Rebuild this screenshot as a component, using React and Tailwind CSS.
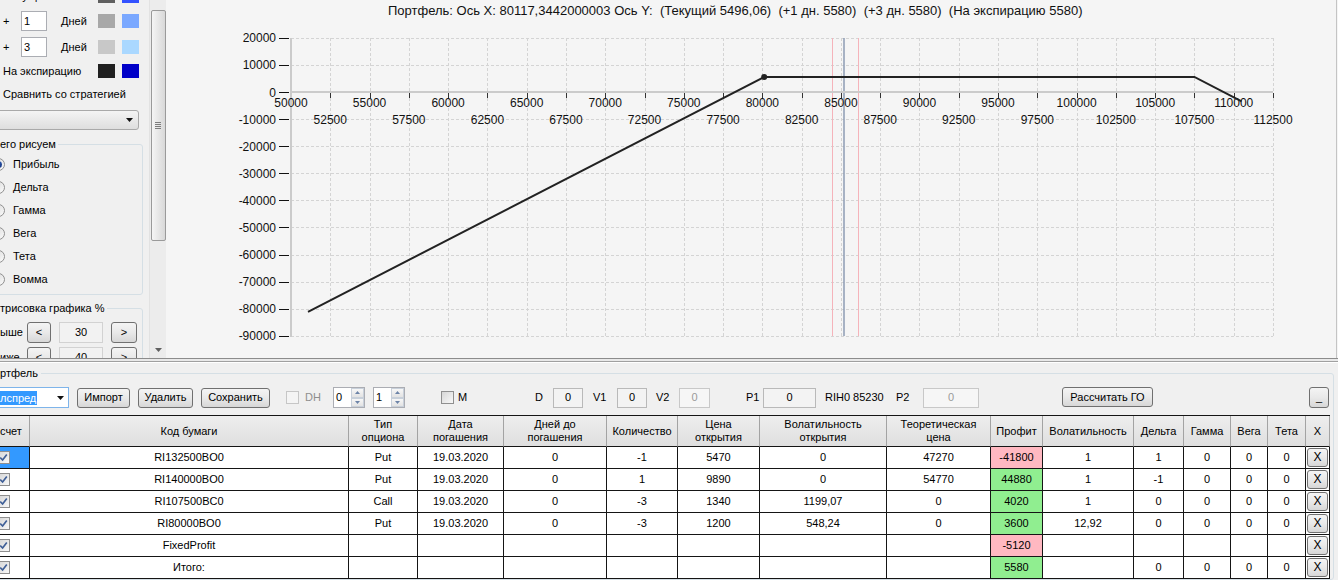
import React from 'react';

function Btn({ children, className = '' }) {
  return (
    <div className={`shrink-0 flex items-center justify-center border border-[#707070] rounded-[3px] bg-linear-to-b from-[#f4f4f4] via-[#e9e9e9] to-[#d7d7d7] text-[11px] text-black ${className}`}>
      {children}
    </div>
  );
}

function Check({ checked = true, className = '' }) {
  return (
    <div className={`shrink-0 w-[13px] h-[13px] border border-[#8f8f8f] bg-linear-to-br from-[#d6d6d6] to-[#f8f8f8] flex items-center justify-center ${className}`}>
      {checked && (
        <svg width="9" height="9" viewBox="0 0 9 9">
          <path d="M1.2 4.6 L3.6 7 L7.8 1.6" stroke="#3f5f97" strokeWidth="1.7" fill="none" />
        </svg>
      )}
    </div>
  );
}

function Radio({ label, checked }) {
  return (
    <div className="h-[23px] flex items-center">
      <div className="shrink-0 w-[13px] h-[13px] rounded-full border border-[#8f8f8f] bg-linear-to-br from-[#d8d8d8] to-[#fbfbfb] flex items-center justify-center">
        {checked && <div className="w-[7px] h-[7px] rounded-full bg-linear-to-br from-[#3a6fd0] to-[#14327a]" />}
      </div>
      <span className="ml-[8px]">{label}</span>
    </div>
  );
}

function Swatch({ className = '' }) {
  return <div className={`shrink-0 w-[17px] h-[14px] ${className}`} />;
}

function Arrow() {
  return (
    <svg width="7" height="4" viewBox="0 0 7 4">
      <path d="M0 0 L7 0 L3.5 4 Z" fill="#111" />
    </svg>
  );
}

function LeftPanel() {
  return (
    <div className="shrink-0 w-[149px] h-[358px] overflow-hidden bg-[#f0f0f0] text-[11px] leading-[13px]">
      <div className="mt-[-16px]">
        <div className="h-[24px] flex items-center">
          <span className="shrink-0 w-[98px] pl-[5px]">Текущий</span>
          <Swatch className="bg-[#5f5f5f]" />
          <Swatch className="ml-[7px] bg-[#3352ff]" />
        </div>
        <div className="h-[26px] flex items-center">
          <span className="shrink-0 w-[21px] pl-[3px]">+</span>
          <div className="shrink-0 w-[26px] h-[20px] border border-[#abadb3] bg-white flex items-center pl-[2px]">1</div>
          <span className="shrink-0 w-[51px] pl-[14px]">Дней</span>
          <Swatch className="bg-[#a8a8a8]" />
          <Swatch className="ml-[7px] bg-[#7aa8ff]" />
        </div>
        <div className="h-[26px] flex items-center">
          <span className="shrink-0 w-[21px] pl-[3px]">+</span>
          <div className="shrink-0 w-[26px] h-[20px] border border-[#abadb3] bg-white flex items-center pl-[2px]">3</div>
          <span className="shrink-0 w-[51px] pl-[14px]">Дней</span>
          <Swatch className="bg-[#c8c8c8]" />
          <Swatch className="ml-[7px] bg-[#aad8ff]" />
        </div>
        <div className="h-[22px] flex items-center">
          <span className="shrink-0 w-[98px] pl-[3px]">На экспирацию</span>
          <Swatch className="bg-[#202020]" />
          <Swatch className="ml-[7px] bg-[#0000c8]" />
        </div>
        <div className="h-[24px] flex items-center pl-[3px]">Сравнить со стратегией</div>
        <div className="mt-[4px] ml-[-4px] w-[143px] h-[20px] border border-[#a9a9a9] rounded-[3px] bg-linear-to-b from-[#f4f4f4] to-[#dedede] flex items-center justify-end pr-[5px]">
          <Arrow />
        </div>
        <fieldset className="mt-[7px] ml-[-10px] w-[153px] border border-[#d5dfe5] rounded-[3px]">
          <legend className="ml-[9px] pr-[2px] leading-[14px]">его рисуем</legend>
          <div className="pl-[1px] pt-[2px] pb-[3px]">
            <Radio label="Прибыль" checked />
            <Radio label="Дельта" />
            <Radio label="Гамма" />
            <Radio label="Вега" />
            <Radio label="Тета" />
            <Radio label="Вомма" />
          </div>
        </fieldset>
        <fieldset className="mt-[6px] ml-[-10px] w-[153px] border border-[#d5dfe5] rounded-[3px]">
          <legend className="ml-[9px] pr-[2px] leading-[14px]">трисовка графика %</legend>
          <div className="pl-[9px] pt-[6px] pb-[6px]">
            <div className="h-[22px] flex items-center">
              <span className="shrink-0 w-[27px]">ыше</span>
              <Btn className="w-[24px] h-[21px]">&lt;</Btn>
              <div className="shrink-0 ml-[8px] w-[44px] h-[21px] border border-[#d2d2d2] bg-[#f2f2f2] flex items-center justify-center">30</div>
              <Btn className="ml-[8px] w-[26px] h-[21px]">&gt;</Btn>
            </div>
            <div className="mt-[3px] h-[22px] flex items-center">
              <span className="shrink-0 w-[27px]">иже</span>
              <Btn className="w-[24px] h-[21px]">&lt;</Btn>
              <div className="shrink-0 ml-[8px] w-[44px] h-[21px] border border-[#d2d2d2] bg-[#f2f2f2] flex items-center justify-center">40</div>
              <Btn className="ml-[8px] w-[26px] h-[21px]">&gt;</Btn>
            </div>
          </div>
        </fieldset>
      </div>
    </div>
  );
}

function ScrollBar() {
  return (
    <div className="shrink-0 w-[17px] h-[358px] bg-[#ececec] border-l border-[#e2e2e2] flex flex-col items-center">
      <div className="mt-[10px] w-[15px] h-[231px] rounded-[2px] border border-[#9a9a9a] bg-linear-to-r from-[#f5f5f5] to-[#d8d8d8] flex flex-col items-center justify-center gap-[1px]">
        <div className="w-[6px] h-[1px] bg-[#7d7d7d]" />
        <div className="w-[6px] h-[1px] bg-[#7d7d7d]" />
        <div className="w-[6px] h-[1px] bg-[#7d7d7d]" />
        <div className="w-[6px] h-[1px] bg-[#7d7d7d]" />
      </div>
      <div className="flex-1" />
      <div className="h-[17px] flex items-center justify-center">
        <svg width="7" height="4" viewBox="0 0 7 4">
          <path d="M0 0 L7 0 L3.5 4 Z" fill="#606060" />
        </svg>
      </div>
    </div>
  );
}

function Chart() {
  const X = (v) => 291 + ((v - 50000) * 982) / 62500;
  const Y = (v) => 92 - (v * 27.09) / 10000;
  const r = (n) => Math.round(n) + 0.5;
  const vgrid = [];
  for (let v = 52500; v <= 112500; v += 2500) vgrid.push(v);
  const hgrid = [];
  for (let v = 20000; v >= -90000; v -= 10000) hgrid.push(v);
  const row1 = [];
  for (let v = 50000; v <= 110000; v += 5000) row1.push(v);
  const row2 = [];
  for (let v = 52500; v <= 112500; v += 5000) row2.push(v);
  const ticks = [];
  for (let v = 52500; v <= 112500; v += 2500) ticks.push(v);
  const pts = [
    [51082, -81174],
    [80117, 5580],
    [107500, 5580],
    [110500, -3420],
  ];
  const d = pts.map((p, i) => `${i ? 'L' : 'M'}${X(p[0]).toFixed(1)} ${Y(p[1]).toFixed(1)}`).join(' ');
  return (
    <div className="flex-1 h-[358px] bg-[#f5f5f5]">
      <svg width="1172" height="358" viewBox="166 0 1172 358" fontFamily="Liberation Sans, Arial, sans-serif" fontSize="12">
        <text x="388" y="15" fontSize="13" fill="#111" xmlSpace="preserve">
          {'Портфель: Ось X: 80117,3442000003 Ось Y:  (Текущий 5496,06)  (+1 дн. 5580)  (+3 дн. 5580)  (На экспирацию 5580)'}
        </text>
        {hgrid
          .filter((v) => v !== 0)
          .map((v) => (
            <line key={'h' + v} x1={291} x2={1273} y1={r(Y(v))} y2={r(Y(v))} stroke="#d4d4d4" strokeDasharray="3 2" />
          ))}
        {vgrid.map((v) => (
          <line key={'v' + v} x1={r(X(v))} x2={r(X(v))} y1={38} y2={336} stroke="#d4d4d4" strokeDasharray="3 2" />
        ))}
        <line x1={832.5} x2={832.5} y1={38} y2={336} stroke="#f5b3ba" />
        <line x1={858.5} x2={858.5} y1={38} y2={336} stroke="#f5b3ba" />
        <line x1={844} x2={844} y1={38} y2={336} stroke="#8d9bb3" strokeWidth="1.5" />
        <line x1={291} x2={1273} y1={92} y2={92} stroke="#cbcbcb" strokeWidth="2" />
        <line x1={291} x2={291} y1={38} y2={337} stroke="#cbcbcb" strokeWidth="2" />
        {hgrid.map((v) => (
          <g key={'yl' + v}>
            <line x1={279} x2={289} y1={r(Y(v))} y2={r(Y(v))} stroke="#111" />
            <text x={276} y={Y(v) + 4.5} textAnchor="end" fill="#111">
              {v}
            </text>
          </g>
        ))}
        {ticks.map((v) => (
          <line key={'t' + v} x1={r(X(v))} x2={r(X(v))} y1={93} y2={98} stroke="#333" />
        ))}
        {row1.map((v) => (
          <text key={'r1' + v} x={X(v)} y={107} textAnchor="middle" fill="#111">
            {v}
          </text>
        ))}
        {row2.map((v) => (
          <text key={'r2' + v} x={X(v)} y={124} textAnchor="middle" fill="#111">
            {v}
          </text>
        ))}
        <path d={d} stroke="#222" strokeWidth="2" fill="none" />
        <circle cx={X(80117)} cy={Y(5580)} r="3" fill="#222" />
        <line x1={1336.5} x2={1336.5} y1={0} y2={358} stroke="#c4c4c4" />
      </svg>
    </div>
  );
}

function Spin({ v, className = '' }) {
  return (
    <div className={`shrink-0 w-[32px] h-[21px] border border-[#abadb3] bg-white flex ${className}`}>
      <span className="flex-1 pl-[2px] flex items-center">{v}</span>
      <div className="w-[13px] flex flex-col">
        <div className="flex-1 border border-[#c8d0da] bg-linear-to-b from-[#f7f7f7] to-[#e3e3e3] flex items-center justify-center">
          <svg width="5" height="3" viewBox="0 0 5 3">
            <path d="M0 3 L2.5 0 L5 3 Z" fill="#6d84a8" />
          </svg>
        </div>
        <div className="flex-1 border border-[#c8d0da] bg-linear-to-b from-[#f7f7f7] to-[#e3e3e3] flex items-center justify-center">
          <svg width="5" height="3" viewBox="0 0 5 3">
            <path d="M0 0 L5 0 L2.5 3 Z" fill="#6d84a8" />
          </svg>
        </div>
      </div>
    </div>
  );
}

function Box({ children, className = '' }) {
  return (
    <div className={`shrink-0 h-[20px] border border-[#b9b9b9] bg-[#f3f3f3] flex items-center justify-center ${className}`}>
      {children}
    </div>
  );
}

function Toolbar() {
  return (
    <div className="h-[21px] flex items-center">
      <div className="shrink-0 ml-[-2px] w-[71px] h-[21px] border border-[#7eb4ea] bg-white flex items-center overflow-hidden">
        <span className="ml-[1px] pr-[1px] h-[14px] leading-[14px] bg-[#3399ff] text-white whitespace-nowrap">лспред</span>
        <div className="ml-auto mr-[4px]">
          <Arrow />
        </div>
      </div>
      <Btn className="ml-[8px] w-[53px] h-[20px]">Импорт</Btn>
      <Btn className="ml-[8px] w-[55px] h-[20px]">Удалить</Btn>
      <Btn className="ml-[8px] w-[69px] h-[20px]">Сохранить</Btn>
      <div className="shrink-0 ml-[16px] w-[13px] h-[13px] border border-[#c6c6c6] bg-[#f4f4f4]" />
      <span className="shrink-0 ml-[6px] w-[28px] text-[#8e8e8e]">DH</span>
      <Spin v="0" />
      <Spin v="1" className="ml-[8px]" />
      <Check checked={false} className="ml-[36px]" />
      <span className="shrink-0 ml-[4px] w-[77px]">M</span>
      <span className="shrink-0 w-[18px]">D</span>
      <Box className="w-[30px]">0</Box>
      <span className="shrink-0 ml-[10px] w-[24px]">V1</span>
      <Box className="w-[30px]">0</Box>
      <span className="shrink-0 ml-[9px] w-[23px]">V2</span>
      <Box className="w-[31px] text-[#9a9a9a] bg-[#f6f6f6] border-[#c8c8c8]">0</Box>
      <span className="shrink-0 ml-[36px] w-[17px]">P1</span>
      <Box className="w-[53px]">0</Box>
      <span className="shrink-0 ml-[9px] w-[71px]">RIH0 85230</span>
      <span className="shrink-0 w-[27px]">P2</span>
      <Box className="w-[56px] text-[#9a9a9a] bg-[#f6f6f6] border-[#c8c8c8]">0</Box>
      <Btn className="ml-[83px] w-[91px] h-[20px] self-start">Рассчитать ГО</Btn>
      <Btn className="ml-[156px] w-[20px] h-[21px]">_</Btn>
    </div>
  );
}

const headers = [
  ['счет'],
  ['Код бумаги'],
  ['Тип', 'опциона'],
  ['Дата', 'погашения'],
  ['Дней до', 'погашения'],
  ['Количество'],
  ['Цена', 'открытия'],
  ['Волатильность', 'открытия'],
  ['Теоретическая', 'цена'],
  ['Профит'],
  ['Волатильность'],
  ['Дельта'],
  ['Гамма'],
  ['Вега'],
  ['Тета'],
  ['X'],
];

const rows = [
  { sel: true, c: ['RI132500BO0', 'Put', '19.03.2020', '0', '-1', '5470', '0', '47270'], p: '-41800', pink: true, r: ['1', '1', '0', '0', '0'] },
  { c: ['RI140000BO0', 'Put', '19.03.2020', '0', '1', '9890', '0', '54770'], p: '44880', r: ['1', '-1', '0', '0', '0'] },
  { c: ['RI107500BC0', 'Call', '19.03.2020', '0', '-3', '1340', '1199,07', '0'], p: '4020', r: ['1', '0', '0', '0', '0'] },
  { c: ['RI80000BO0', 'Put', '19.03.2020', '0', '-3', '1200', '548,24', '0'], p: '3600', r: ['12,92', '0', '0', '0', '0'] },
  { c: ['FixedProfit', '', '', '', '', '', '', ''], p: '-5120', pink: true, r: ['', '', '', '', ''] },
  { c: ['Итого:', '', '', '', '', '', '', ''], p: '5580', r: ['', '0', '0', '0', '0'] },
];

function Table() {
  const cell = 'h-[22px] border-r border-b border-[#151515] flex items-center justify-center bg-white';
  return (
    <div className="w-max border-t border-[#151515] grid grid-cols-[30px_319px_69px_86px_103px_71px_82px_127px_104px_52px_91px_50px_47px_37px_38px_24px] text-[11px] leading-[13px]">
      {headers.map((h, i) => (
        <div
          key={'h' + i}
          className={`h-[31px] border-r border-b border-r-[#a3a3a3] border-b-[#151515] bg-linear-to-b from-[#eeeeee] to-[#dfdfdf] flex items-center text-center ${i === 0 ? 'justify-start' : 'justify-center'}`}
        >
          <div>
            {h.map((t, j) => (
              <div key={j}>{t}</div>
            ))}
          </div>
        </div>
      ))}
      {rows.map((row, ri) => (
        <React.Fragment key={'r' + ri}>
          <div className={`h-[22px] border-r border-b border-[#151515] flex items-center justify-start ${row.sel ? 'bg-[#3399ff]' : 'bg-white'}`}>
            <Check className="ml-[-3px]" />
          </div>
          {row.c.map((t, ci) => (
            <div key={'c' + ci} className={cell}>
              {t}
            </div>
          ))}
          <div className={`h-[22px] border-r border-b border-[#151515] flex items-center justify-center ${row.pink ? 'bg-[#ffb8c1]' : 'bg-[#90ee90]'}`}>{row.p}</div>
          {row.r.map((t, ci) => (
            <div key={'g' + ci} className={cell}>
              {t}
            </div>
          ))}
          <div className="h-[22px] border-r border-b border-[#151515] bg-white p-[1px] flex">
            <Btn className="flex-1 h-full rounded-[2px] text-[12px]">X</Btn>
          </div>
        </React.Fragment>
      ))}
    </div>
  );
}

function Bottom() {
  return (
    <fieldset className="mt-[3px] ml-[-8px] w-[1342px] border border-[#d5dfe5] rounded-[3px]">
      <legend className="ml-[7px] pr-[3px] text-[11px] leading-[14px]">ртфель</legend>
      <div className="pl-[7px] pt-[7px]">
        <Toolbar />
        <div className="mt-[7px]">
          <Table />
        </div>
      </div>
    </fieldset>
  );
}

export default function App() {
  return (
    <div className="w-[1338px] h-[580px] overflow-hidden bg-[#f0f0f0] font-['Liberation_Sans',Arial,sans-serif] text-[11px] text-black leading-[13px]">
      <div className="flex h-[358px]">
        <LeftPanel />
        <ScrollBar />
        <Chart />
      </div>
      <div className="h-[1px] bg-[#8c8c8c]" />
      <div className="h-[2px] bg-[#e9e9e9]" />
      <div className="h-[1px] bg-[#a0a0a0]" />
      <div className="h-[1px] bg-white" />
      <Bottom />
    </div>
  );
}
